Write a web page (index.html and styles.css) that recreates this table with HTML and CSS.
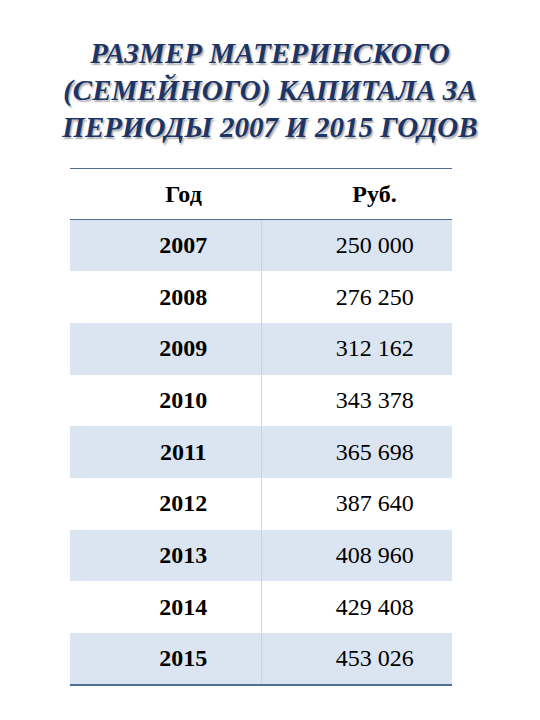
FILE: index.html
```html
<!DOCTYPE html>
<html lang="ru">
<head>
<meta charset="utf-8">
<link rel="stylesheet" href="styles.css">
</head>
<body>
<div class="page">
  <h1 class="title">РАЗМЕР МАТЕРИНСКОГО<br>(СЕМЕЙНОГО) КАПИТАЛА ЗА<br>ПЕРИОДЫ 2007 И 2015 ГОДОВ</h1>
  <table class="capital">
    <thead>
      <tr><th>Год</th><th>Руб.</th></tr>
    </thead>
    <tbody>
      <tr class="shade"><td class="year">2007</td><td>250 000</td></tr>
      <tr><td class="year">2008</td><td>276 250</td></tr>
      <tr class="shade"><td class="year">2009</td><td>312 162</td></tr>
      <tr><td class="year">2010</td><td>343 378</td></tr>
      <tr class="shade"><td class="year">2011</td><td>365 698</td></tr>
      <tr><td class="year">2012</td><td>387 640</td></tr>
      <tr class="shade"><td class="year">2013</td><td>408 960</td></tr>
      <tr><td class="year">2014</td><td>429 408</td></tr>
      <tr class="shade"><td class="year">2015</td><td>453 026</td></tr>
    </tbody>
  </table>
</div>
</body>
</html>
```
FILE: styles.css
```css
html, body {
  margin: 0;
  padding: 0;
  background: #ffffff;
}
.page {
  width: 540px;
  height: 720px;
  padding-top: 35px;
  box-sizing: border-box;
  font-family: "Liberation Serif", serif;
}
.title {
  margin: 0;
  text-align: center;
  font-family: "Liberation Serif", serif;
  font-size: 29px;
  line-height: 37px;
  font-weight: 700;
  font-style: italic;
  color: #1c3566;
  text-shadow: 1.5px 1.5px 1.5px rgba(110, 110, 110, 0.55);
}
.capital {
  margin: 22px 0 0 70px;
  width: 382px;
  border-collapse: collapse;
  font-size: 24px;
  color: #000;
  border-top: 1px solid #4f6f96;
  border-bottom: 2px solid #4f6f96;
}
.capital th,
.capital td {
  height: 51.7px;
  padding: 0 0 0 36px;
  text-align: center;
  vertical-align: middle;
  width: 50%;
  box-sizing: border-box;
}
.capital thead th {
  border-bottom: 1px solid #4f6f96;
  font-weight: bold;
  height: 51px;
}
.capital td.year {
  font-weight: bold;
  border-right: 1px solid #c5d3e6;
  width: 192px;
}
.capital tr.shade td {
  background: #dbe5f1;
}
```
